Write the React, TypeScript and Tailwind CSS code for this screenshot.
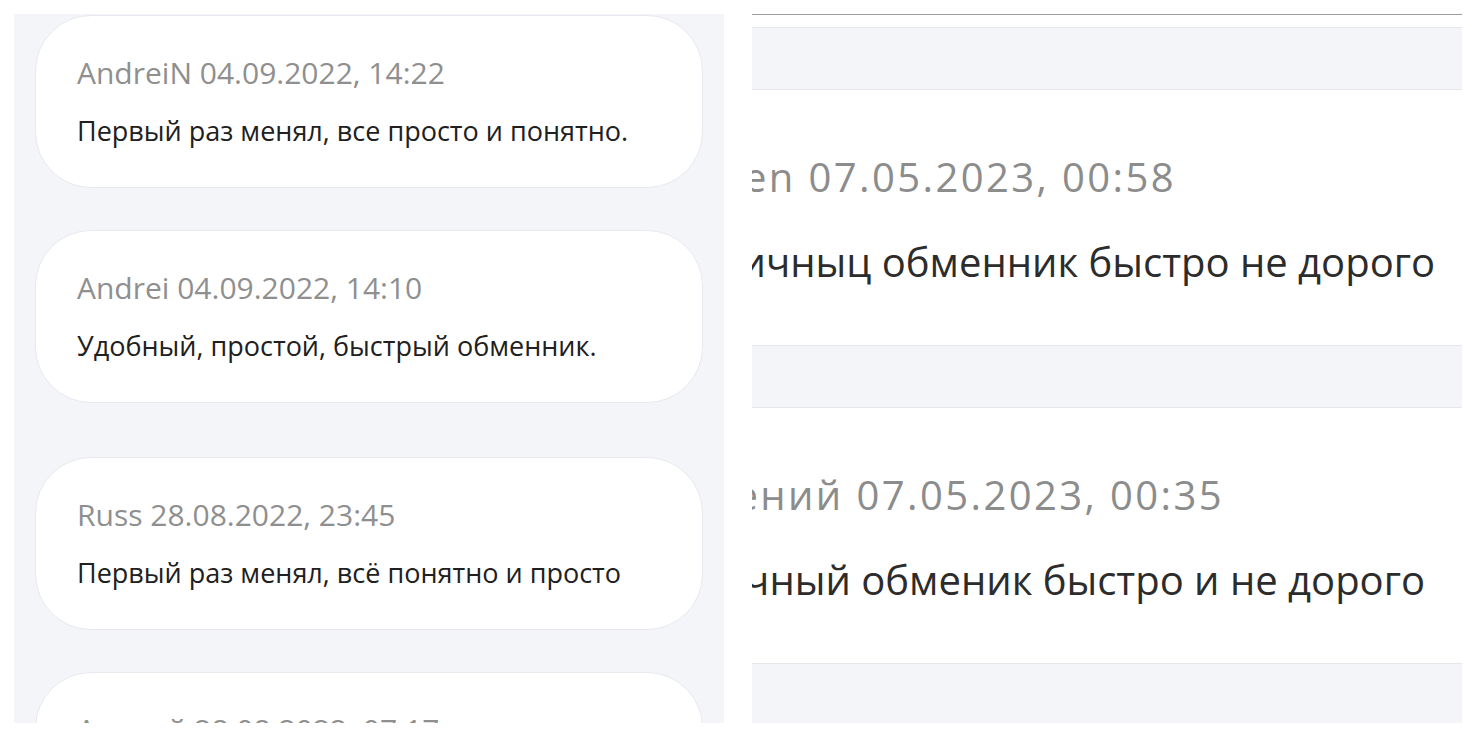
import React from "react";

const reviews = [
  { name: "AndreiN", date: "04.09.2022, 14:22", text: "Первый раз менял, все просто и понятно.", gap: "mt-px" },
  { name: "Andrei", date: "04.09.2022, 14:10", text: "Удобный, простой, быстрый обменник.", gap: "mt-[42px]" },
  { name: "Russ", date: "28.08.2022, 23:45", text: "Первый раз менял, всё понятно и просто", gap: "mt-[54px]" },
  { name: "Андрей", date: "28.08.2022, 07:17", text: "Всё быстро, рекомендую.", gap: "mt-[42px]" },
];

// zoomed-in part, text is clipped on the left edge
const zoomed = [
  {
    title: "Eugen 07.05.2023, 00:58",
    titleW: "w-[424px]",
    text: "Отличныц обменник быстро не дорого",
    textW: "w-[683px]",
  },
  {
    title: "Евгений 07.05.2023, 00:35",
    titleW: "w-[472px]",
    text: "Отличный обменик быстро и не дорого",
    textW: "w-[673px]",
  },
];

function ReviewCard({ r }: { r: (typeof reviews)[number] }) {
  return (
    <div
      className={`${r.gap} mx-[21px] h-[173px] shrink-0 rounded-[56px] border border-[#e8e9ee] bg-white pl-[41px] pt-[39px]`}
    >
      <p className="text-[30px] leading-[36px] text-[#8f8f8f]">
        {r.name} {r.date}
      </p>
      <p className="mt-[24px] text-[27px] leading-[32px] text-[#202020]">{r.text}</p>
    </div>
  );
}

export default function App() {
  return (
    <div
      className="flex h-[738px] w-[1476px] bg-white pt-[14px]"
      style={{ fontFamily: "'Open Sans', 'Noto Sans', sans-serif" }}
    >
      {/* left: list of review cards */}
      <div className="ml-[14px] flex h-[709px] w-[710px] flex-col overflow-hidden bg-[#f4f5f9]">
        {reviews.map((r) => (
          <ReviewCard key={r.name + r.date} r={r} />
        ))}
      </div>

      {/* right: zoomed fragment */}
      <div className="ml-[28px] flex h-[709px] w-[710px] flex-col overflow-hidden border-t border-[#9c9c9c]">
        <div className="h-[12px] shrink-0" />
        <div className="h-[63px] shrink-0 border-y border-[#e6e7ec] bg-[#f4f5f9]" />
        {zoomed.map((z, i) => (
          <React.Fragment key={i}>
            <div className="h-[255px] shrink-0 pt-[63px]">
              <div className={`${z.titleW} flex justify-end overflow-hidden whitespace-nowrap`}>
                <span className="text-[40px] leading-[48px] tracking-[0.06em] text-[#8c8c8c]">{z.title}</span>
              </div>
              <div className={`${z.textW} mt-[37px] flex justify-end overflow-hidden whitespace-nowrap`}>
                <span className="text-[40px] leading-[48px] text-[#2c2c2c]">{z.text}</span>
              </div>
            </div>
            <div
              className={`${i === zoomed.length - 1 ? "h-[60px] border-b-0" : "h-[63px] border-b"} shrink-0 border-t border-[#e6e7ec] bg-[#f4f5f9]`}
            />
          </React.Fragment>
        ))}
      </div>
    </div>
  );
}
